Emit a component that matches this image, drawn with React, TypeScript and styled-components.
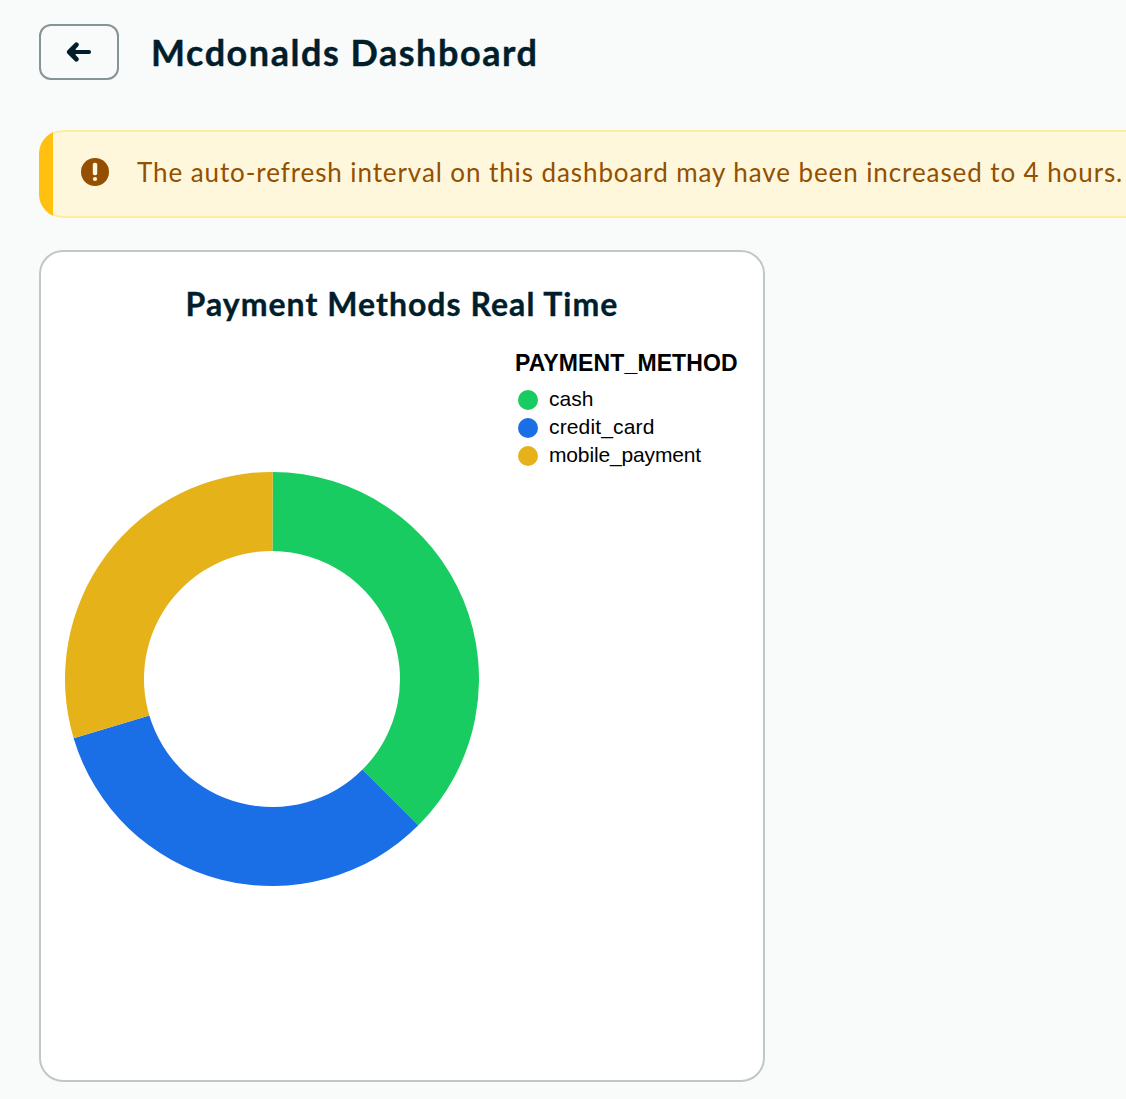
import React from "react";
import styled, { createGlobalStyle } from "styled-components";

const GlobalStyle = createGlobalStyle`
  *, *::before, *::after { box-sizing: border-box; }
  html, body { margin: 0; background: #f9fbfa; overflow: hidden; }
  body { font-family: Lato, "Open Sans", sans-serif; color: #001e2b; }
`;

const Page = styled.main`
  height: 1099px;
  padding: 24px 0 0 39px;
  overflow: hidden;
`;

const Header = styled.header`
  display: flex;
  align-items: center;
  gap: 32px;
  height: 56px;
`;

const BackButton = styled.button`
  display: flex;
  align-items: center;
  justify-content: center;
  width: 80px;
  height: 56px;
  padding: 0;
  border: 2px solid #889397;
  border-radius: 12px;
  background: #f9fbfa;
  color: #001e2b;
`;

const Title = styled.h1`
  margin: 0;
  padding-bottom: 1px;
  font-size: 36px;
  line-height: 54px;
  font-weight: 700;
  letter-spacing: 1.53px;
  -webkit-text-stroke: 0.4px currentColor;
  white-space: nowrap;
`;

const Banner = styled.div`
  position: relative;
  display: flex;
  align-items: center;
  width: 1400px;
  height: 88px;
  margin-top: 50px;
  padding-left: 40px;
  gap: 28px;
  border: 2px solid #ffec9e;
  border-radius: 24px;
  background: #fef7db;
  clip-path: inset(0 round 24px);
  color: #944f01;

  &::before {
    content: "";
    position: absolute;
    top: -2px;
    bottom: -2px;
    left: -2px;
    width: 14px;
    background: #ffc010;
  }
`;

const BannerText = styled.span`
  font-size: 26px;
  line-height: 40px;
  letter-spacing: 0.91px;
  white-space: nowrap;
  padding-bottom: 4px;
`;

const BannerIcon = styled.svg`
  flex: none;
  margin-bottom: 4px;
`;

const Card = styled.section`
  width: 726px;
  height: 832px;
  margin-top: 32px;
  border: 2px solid #c1c7c6;
  border-radius: 24px;
  background: #fff;
`;

const CardTitle = styled.h2`
  margin: 32px 0 0;
  font-size: 32px;
  line-height: 40px;
  font-weight: 700;
  letter-spacing: 1.03px;
  -webkit-text-stroke: 0.35px currentColor;
  text-align: center;
  white-space: nowrap;
`;

const ChartArea = styled.div`
  display: flex;
  align-items: flex-start;
  padding: 26px 0 0 24px;
`;

const Donut = styled.svg`
  flex: none;
  margin-top: 122px;
`;

const Legend = styled.div`
  margin-left: 36px;
  color: #000;
  font-family: "Liberation Sans", Arial, sans-serif;
  white-space: nowrap;
`;

const LegendTitle = styled.div`
  font-size: 23px;
  line-height: 26px;
  font-weight: 700;
  letter-spacing: 0.12px;
`;

const LegendList = styled.ul`
  margin: 10px 0 0;
  padding: 0 0 0 3px;
  list-style: none;
`;

const LegendItem = styled.li`
  display: flex;
  align-items: center;
  gap: 11px;
  height: 28px;
  font-size: 21px;
`;

const Swatch = styled.span<{ $color: string }>`
  width: 20px;
  height: 20px;
  border-radius: 50%;
  background: ${(p) => p.$color};
`;

const LegendLabel = styled.span<{ $spacing: number }>`
  line-height: 26px;
  padding-bottom: 2px;
  letter-spacing: ${(p) => p.$spacing}px;
`;

const slices = [
  { label: "cash", color: "#18cc61", from: 0.2, to: 135, spacing: 0 },
  { label: "credit_card", color: "#1a6ee6", from: 135, to: 253.4, spacing: 0.15 },
  { label: "mobile_payment", color: "#e5b21a", from: 253.4, to: 360.2, spacing: -0.15 },
];

const OUTER = 207;
const INNER = 128;

function point(radius: number, degrees: number) {
  const a = (degrees * Math.PI) / 180;
  return `${(OUTER + radius * Math.sin(a)).toFixed(2)} ${(OUTER - radius * Math.cos(a)).toFixed(2)}`;
}

function arcPath(from: number, to: number) {
  return `M${point(OUTER, from)}A${OUTER} ${OUTER} 0 0 1 ${point(OUTER, to)}L${point(INNER, to)}A${INNER} ${INNER} 0 0 0 ${point(INNER, from)}Z`;
}

export default function App() {
  return (
    <>
      <GlobalStyle />
      <Page>
        <Header>
          <BackButton aria-label="Back">
            <svg width="26" height="20" viewBox="0 0 26 20" fill="none" stroke="currentColor" strokeLinecap="round" strokeLinejoin="round">
              <path d="M4 10H23" strokeWidth="4" />
              <path d="M10.3 2.8L3.3 10l7 7.2" strokeWidth="4.8" />
              <path d="M5 10L9 6.2v7.6z" fill="currentColor" strokeWidth="1" />
            </svg>
          </BackButton>
          <Title>Mcdonalds Dashboard</Title>
        </Header>
        <Banner>
          <BannerIcon width="28" height="28" viewBox="0 0 28 28">
            <circle cx="14" cy="14" r="14" fill="currentColor" />
            <rect x="11.8" y="4.8" width="4.4" height="12.4" rx="1.8" fill="#fef7db" />
            <circle cx="14" cy="21" r="2.1" fill="#fef7db" />
          </BannerIcon>
          <BannerText>The auto-refresh interval on this dashboard may have been increased to 4 hours.</BannerText>
        </Banner>
        <Card>
          <CardTitle>Payment Methods Real Time</CardTitle>
          <ChartArea>
            <Donut width="414" height="414" viewBox="0 0 414 414">
              {slices.map((s) => (
                <path key={s.label} d={arcPath(s.from, s.to)} fill={s.color} />
              ))}
            </Donut>
            <Legend>
              <LegendTitle>PAYMENT_METHOD</LegendTitle>
              <LegendList>
                {slices.map((s) => (
                  <LegendItem key={s.label}>
                    <Swatch $color={s.color} />
                    <LegendLabel $spacing={s.spacing}>{s.label}</LegendLabel>
                  </LegendItem>
                ))}
              </LegendList>
            </Legend>
          </ChartArea>
        </Card>
      </Page>
    </>
  );
}
